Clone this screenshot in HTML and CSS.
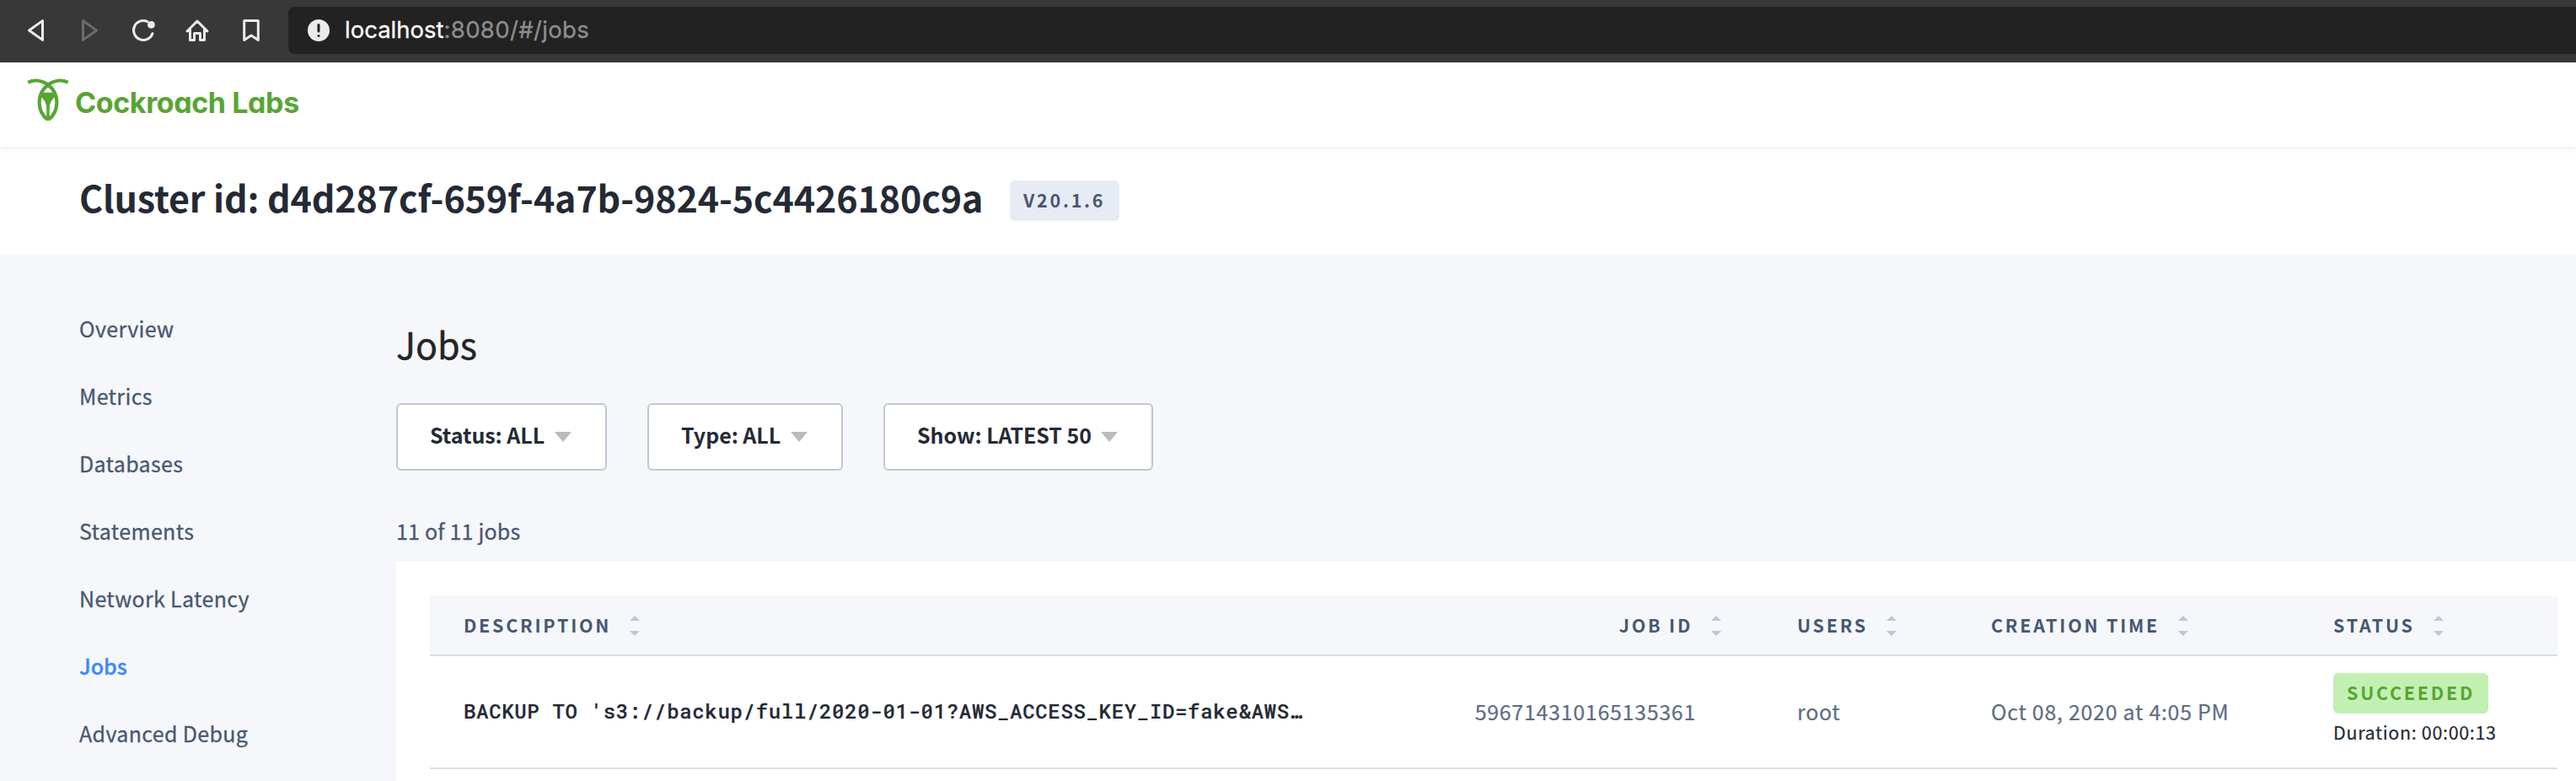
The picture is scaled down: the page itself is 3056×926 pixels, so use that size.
FILE: index.html
```html
<!DOCTYPE html>
<html lang="en">
<head>
<meta charset="utf-8">
<title>Jobs | Cockroach Console</title>
<link rel="stylesheet" href="styles.css">
</head>
<body>
<div class="toolbar">
  <div class="tools">
    <svg class="tool" viewBox="0 0 32 32"><path d="M24.5 4.6V27.4L8.500 16z"/></svg>
    <svg class="tool tool-off" viewBox="0 0 32 32"><path d="M8.500 4.600V27.400L24.500 16z"/></svg>
    <svg class="tool" viewBox="0 0 32 32"><path d="M26.9 19.7A11.5 11.5 0 1 1 21 5.6"/><circle class="dot" cx="25.4" cy="9.4" r="4.4"/></svg>
    <svg class="tool" viewBox="0 0 32 32"><path d="M4 17L16 5L28 17M7.5 14.5V27.5H12.5V19.5H19.5V27.5H24.5V14.5"/></svg>
    <svg class="tool" viewBox="0 0 32 32"><path d="M7.7 4.5H24.3V27.5L16 22L7.7 27.5z"/></svg>
  </div>
  <div class="address">
    <svg class="info" viewBox="0 0 26 26"><circle cx="13" cy="13" r="13"/><path d="M13 6.5V14"/><path d="M13 19.5V19.6"/></svg>
    <span class="url"><span class="host">localhost</span>:8080/#/jobs</span>
  </div>
</div>
<header class="brand">
  <svg class="mark" viewBox="0 0 50 54">
    <path class="line" d="M1.300 5.600C9 2 18 3.200 25 8.600C31.500 13.500 35.400 20 35.400 29.500C35.400 39 31 46 25 50"/>
    <path class="line" d="M48.700 5.600C41 2 32 3.200 25 8.600C18.500 13.500 14.600 20 14.600 29.500C14.600 39 19 46 25 50"/>
    <path class="core" d="M17 18.300Q25 16.800 33 18.300L34.500 22C31 24.500 27.300 29 27 34Q26.400 40 27 50H23Q23.600 40 23 34C22.700 29 19 24.500 15.500 22z"/>
  </svg>
  <span class="wordmark">Cockroach Labs</span>
</header>
<section class="cluster">
  <h1 class="cluster-id">Cluster id: d4d287cf-659f-4a7b-9824-5c4426180c9a</h1>
  <span class="tag tag-version">V20.1.6</span>
</section>
<div class="layout">
  <nav class="nav">
    <a>Overview</a>
    <a>Metrics</a>
    <a>Databases</a>
    <a>Statements</a>
    <a>Network Latency</a>
    <a class="active">Jobs</a>
    <a>Advanced Debug</a>
  </nav>
  <main class="main">
    <h2 class="title">Jobs</h2>
    <div class="filters">
      <div class="filter filter-status">Status: ALL<i class="caret"></i></div>
      <div class="filter filter-type">Type: ALL<i class="caret"></i></div>
      <div class="filter filter-show">Show: LATEST 50<i class="caret"></i></div>
    </div>
    <div class="count">11 of 11 jobs</div>
    <div class="panel">
      <div class="row head">
        <div class="th">DESCRIPTION<svg class="sort" viewBox="0 0 12 24"><path d="M0 6L6 0L12 6zM0 18H12L6 24z"/></svg></div>
        <div class="th th-right">JOB ID<svg class="sort" viewBox="0 0 12 24"><path d="M0 6L6 0L12 6zM0 18H12L6 24z"/></svg></div>
        <div class="th">USERS<svg class="sort" viewBox="0 0 12 24"><path d="M0 6L6 0L12 6zM0 18H12L6 24z"/></svg></div>
        <div class="th">CREATION TIME<svg class="sort" viewBox="0 0 12 24"><path d="M0 6L6 0L12 6zM0 18H12L6 24z"/></svg></div>
        <div class="th">STATUS<svg class="sort" viewBox="0 0 12 24"><path d="M0 6L6 0L12 6zM0 18H12L6 24z"/></svg></div>
      </div>
      <div class="row body">
        <div class="td sql">BACKUP TO 's3://backup/full/2020-01-01?AWS_ACCESS_KEY_ID=fake&amp;AWS…</div>
        <div class="td td-right">596714310165135361</div>
        <div class="td">root</div>
        <div class="td">Oct 08, 2020 at 4:05 PM</div>
        <div class="td status">
          <span class="tag tag-ok">SUCCEEDED</span>
          <span class="duration">Duration: 00:00:13</span>
        </div>
      </div>
    </div>
  </main>
</div>
</body>
</html>
```
FILE: styles.css
```css
* { box-sizing: border-box; }
body {
  margin: 0;
  height: 926px;
  overflow: hidden;
  display: flex;
  flex-direction: column;
  background: #fff;
  font-family: "Noto Sans CJK SC", "Noto Sans", sans-serif;
  white-space: nowrap;
}

/* Browser toolbar */
.toolbar {
  flex: none;
  height: 74px;
  display: flex;
  align-items: flex-start;
  gap: 28px;
  padding: 8px 0 0 26px;
  background: #383838;
}
.tools { display: flex; gap: 32px; padding-top: 12px; }
.tool {
  width: 32px;
  height: 32px;
  fill: none;
  stroke: #ececec;
  stroke-width: 3;
  stroke-linejoin: round;
  stroke-linecap: round;
}
.tool-off { stroke: #6c6c6c; }
.tool .dot { fill: #ececec; stroke: none; }
.address {
  flex: 1;
  height: 56px;
  display: flex;
  align-items: center;
  gap: 18px;
  padding-left: 23px;
  border-radius: 8px 0 0 8px;
  background: #222;
}
.info { width: 26px; height: 26px; fill: #ebebeb; }
.info path { stroke: #222; stroke-width: 3; stroke-linecap: round; }
.url {
  font-family: Inter, sans-serif;
  font-size: 27.5px;
  line-height: 54px;
  padding-bottom: 2px;
  letter-spacing: 0.35px;
  -webkit-text-stroke: 0.3px;
  color: #8e8e8e;
}
.host { color: #fff; letter-spacing: 0; }

/* Brand bar */
.brand {
  flex: none;
  height: 100px;
  display: flex;
  align-items: flex-start;
  padding: 18px 0 0 32px;
  position: relative;
  background: #fff;
  box-shadow: 0 2px 8px rgba(0, 0, 0, 0.08);
}
.mark { width: 50px; height: 54px; }
.mark .line { fill: none; stroke: #57a533; stroke-width: 4.2; }
.mark .core { fill: #57a533; }
.wordmark {
  margin: 10px 0 0 7px;
  font-family: Inter, sans-serif;
  font-weight: 700;
  font-size: 34px;
  line-height: 40px;
  letter-spacing: -0.4px;
  font-feature-settings: "cv11";
  color: #57a533;
}

/* Cluster heading */
.cluster {
  flex: none;
  height: 128px;
  display: flex;
  align-items: flex-start;
  padding: 29px 0 0 94px;
}
.cluster-id {
  margin: 0;
  width: 1104px;
  font-size: 43px;
  font-weight: 600;
  line-height: 60px;
  letter-spacing: -0.14px;
  color: #242a35;
}
.tag {
  display: block;
  height: 48px;
  padding-left: 16px;
  border-radius: 6px;
  font-size: 21.5px;
  font-weight: 600;
  line-height: 45px;
  letter-spacing: 2.75px;
}
.tag-version { width: 130px; margin-top: 11px; background: #e7ebf3; color: #475872; }
.tag-ok { width: 184px; background: #c2f0b3; color: #57a533; }

/* Page layout */
.layout { flex: 1; display: flex; min-height: 0; background: #f6f7fb; }
.nav {
  width: 470px;
  flex: none;
  display: flex;
  flex-direction: column;
  padding: 47px 0 0 94px;
}
.nav a {
  font-size: 25px;
  line-height: 80px;
  letter-spacing: 0.35px;
  -webkit-text-stroke: 0.3px;
  color: #475872;
}
.nav .active { color: #3a8af7; letter-spacing: 0; font-weight: 500; }
.main { flex: 1; padding-top: 75px; }
.title {
  margin: 0;
  font-size: 43px;
  font-weight: 400;
  line-height: 60px;
  -webkit-text-stroke: 0.4px;
  color: #242424;
}
.filters { display: flex; gap: 48px; margin-top: 41px; }
.filter {
  height: 80px;
  display: flex;
  justify-content: space-between;
  padding: 0 40px 0 38px;
  border: 2px solid #c0c6d9;
  border-radius: 6px;
  background: #fff;
  font-size: 25px;
  font-weight: 600;
  line-height: 70px;
  letter-spacing: -0.05px;
  color: #242a35;
}
.filter-status { width: 250px; }
.filter-type { width: 232px; }
.filter-show { width: 320px; }
.caret {
  margin-top: 32px;
  width: 20px;
  height: 12px;
  background: #b9bbbc;
  clip-path: polygon(0 0, 100% 0, 50% 100%);
}
.count {
  margin: 51px 0 17px;
  font-size: 25px;
  line-height: 40px;
  letter-spacing: 0.2px;
  -webkit-text-stroke: 0.3px;
  color: #475872;
}

/* Jobs table */
.panel { height: 260px; padding: 40px 22px 0 40px; background: #fff; }
.row {
  display: grid;
  grid-template-columns: 1082px 500px 230px 406px 306px;
}
.head { height: 72px; border-bottom: 2px solid #dadee9; background: #f6f7fb; }
.th {
  display: flex;
  padding-left: 40px;
  font-size: 21.5px;
  font-weight: 600;
  line-height: 69px;
  letter-spacing: 2.75px;
  color: #475872;
}
.th-right { justify-content: flex-end; padding-right: 50px; }
.sort { width: 12px; height: 24px; margin: 24px 0 0 22px; fill: #c0c6d9; }
.body { height: 134px; border-bottom: 2px solid #dadee9; }
.td {
  padding-left: 40px;
  font-size: 25px;
  line-height: 130px;
  letter-spacing: 0.7px;
  -webkit-text-stroke: 0.2px;
  color: #5f6c87;
}
.td-right { text-align: right; padding-right: 80px; }
.sql {
  font-family: "Roboto Mono", "DejaVu Sans Mono", monospace;
  font-size: 24px;
  font-weight: 500;
  letter-spacing: 0.67px;
  color: #242a35;
}
.status { display: flex; flex-direction: column; padding-top: 20px; -webkit-text-stroke: 0; }
.duration {
  margin-top: 6px;
  font-size: 21.5px;
  line-height: 32px;
  letter-spacing: 0.65px;
  -webkit-text-stroke: 0.2px;
  color: #242a35;
}
```
